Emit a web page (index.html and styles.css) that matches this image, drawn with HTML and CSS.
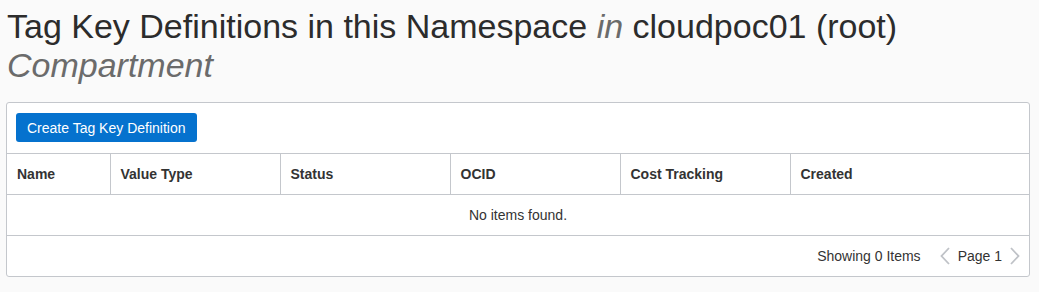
FILE: index.html
```html
<!DOCTYPE html>
<html>
<head>
<meta charset="utf-8">
<link rel="stylesheet" href="styles.css">
</head>
<body>
<h1 class="title">Tag Key Definitions in this Namespace <em>in</em> cloudpoc01 (root) <em>Compartment</em></h1>
<div class="panel">
  <div class="toolbar">
    <button class="btn">Create Tag Key Definition</button>
  </div>
  <table class="grid">
    <thead>
      <tr>
        <th class="c-name">Name</th>
        <th class="c-mid">Value Type</th>
        <th class="c-mid">Status</th>
        <th class="c-mid">OCID</th>
        <th class="c-mid">Cost Tracking</th>
        <th>Created</th>
      </tr>
    </thead>
    <tbody>
      <tr><td class="empty" colspan="6">No items found.</td></tr>
    </tbody>
  </table>
  <div class="footer">
    <span class="count">Showing 0 Items</span>
    <span class="pager">
      <svg class="chev" width="12" height="18" viewBox="0 0 12 18"><path d="M10 1 L2.5 9 L10 17" fill="none" stroke="#bfc2c7" stroke-width="1.8"/></svg>
      <span class="page">Page 1</span>
      <svg class="chev" width="12" height="18" viewBox="0 0 12 18"><path d="M2 1 L9.5 9 L2 17" fill="none" stroke="#bfc2c7" stroke-width="1.8"/></svg>
    </span>
  </div>
</div>
</body>
</html>
```
FILE: styles.css
```css
html, body {
  margin: 0;
  padding: 0;
  background: #fafafa;
}
body {
  padding: 0 9px 0 6px;
  font-family: "Liberation Sans", Arial, sans-serif;
  color: #333;
}
.title {
  margin: 0;
  padding: 7px 0 0 1px;
  font-size: 34px;
  font-weight: normal;
  line-height: 39px;
  color: #2c2c2c;
}
.title em {
  color: #6b6b6b;
  font-style: italic;
}
.panel {
  margin-top: 17px;
  background: #fff;
  border: 1px solid #c4c7cc;
  border-radius: 3px;
}
.toolbar {
  padding: 10px 9px 11px;
  border-bottom: 1px solid #c4c7cc;
}
.btn {
  display: block;
  height: 29px;
  padding: 0 11px;
  background: #0572ce;
  color: #fff;
  border: none;
  border-radius: 3px;
  font-family: "Liberation Sans", Arial, sans-serif;
  font-size: 14px;
}
.grid {
  width: 100%;
  border-collapse: collapse;
  table-layout: fixed;
}
.grid th {
  height: 40px;
  padding: 0 10px;
  text-align: left;
  font-size: 14px;
  font-weight: bold;
  color: #333;
  border-right: 1px solid #c4c7cc;
  border-bottom: 1px solid #c4c7cc;
}
.grid th:last-child {
  border-right: none;
}
.grid th.c-name {
  width: 103px;
  box-sizing: border-box;
}
.grid th.c-mid {
  width: 170px;
  box-sizing: border-box;
}
.empty {
  height: 40px;
  text-align: center;
  font-size: 14px;
  color: #333;
  border-bottom: 1px solid #c4c7cc;
  padding: 0;
}
.footer {
  height: 40px;
  display: flex;
  align-items: center;
  justify-content: flex-end;
  padding-right: 8px;
  font-size: 14px;
  color: #333;
}
.pager {
  display: flex;
  align-items: center;
  margin-left: 18px;
  gap: 7px;
}
.chev {
  display: block;
}
```
